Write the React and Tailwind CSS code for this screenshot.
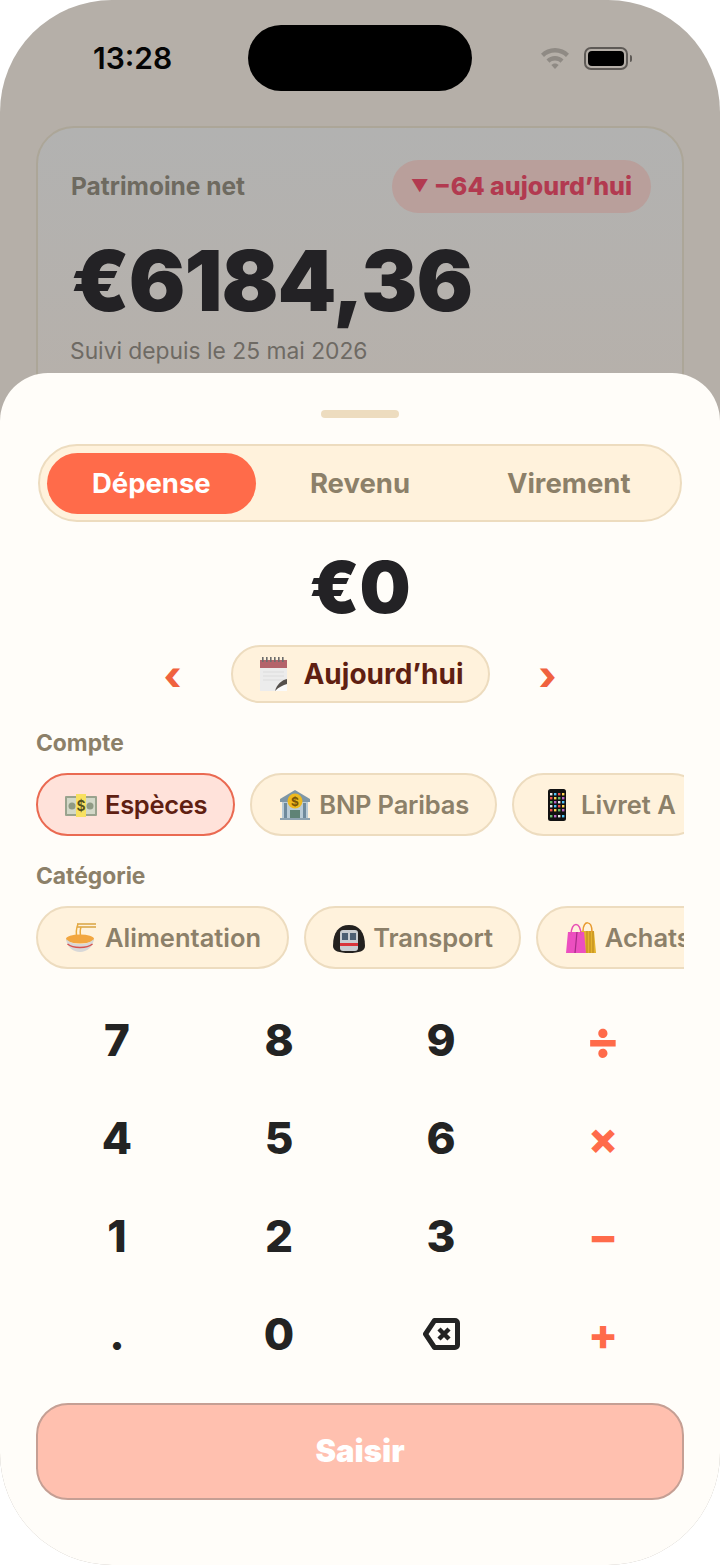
import React from 'react';

const CashIcon = () => (
  <svg width="32" height="26" viewBox="0 0 32 26">
    <rect x="0" y="4" width="32" height="20" rx="1" fill="#9aa38e" />
    <rect x="2" y="6" width="28" height="16" fill="#d3d8c8" />
    <circle cx="7" cy="14" r="3.5" fill="#8f9a84" />
    <circle cx="25" cy="14" r="3.5" fill="#8f9a84" />
    <rect x="11" y="2" width="10" height="23" fill="#f8e060" />
    <text x="16" y="19" textAnchor="middle" fontSize="14" fontWeight="600" fill="#54521f" fontFamily="Inter, sans-serif">$</text>
  </svg>
);

const BankIcon = () => (
  <svg width="32" height="32" viewBox="0 0 32 32">
    <path d="M1 10 16 1l15 9v3H1z" fill="#7f97a6" />
    <rect x="3" y="13" width="26" height="16" fill="#b9cbd6" />
    <rect x="5" y="14" width="3" height="15" fill="#6f8a9c" />
    <rect x="24" y="14" width="3" height="15" fill="#6f8a9c" />
    <rect x="11" y="21" width="10" height="8" fill="#5f8376" />
    <rect x="1" y="29" width="30" height="2" fill="#8ea3b1" />
    <circle cx="16" cy="12" r="7.500" fill="#eeb91e" />
    <text x="16" y="16.500" textAnchor="middle" fontSize="12" fontWeight="700" fill="#7a5607" fontFamily="Inter, sans-serif">$</text>
  </svg>
);

const PhoneIcon = () => (
  <svg width="32" height="32" viewBox="0 0 32 32">
    <rect x="7" y="0" width="18" height="32" rx="2.500" fill="#111" />
    {[5, 9, 13, 17, 21, 27].map((y, r) =>
      [10, 14, 18, 22].map((x, c) => (
        <rect
          key={`${r}-${c}`}
          x={x - 1}
          y={y - 1}
          width="2.400"
          height="2.400"
          fill={['#e8e8e8', '#4fc3f7', '#ef5350', '#ffd54f', '#66bb6a', '#ba68c8'][(r * 2 + c) % 6]}
        />
      ))
    )}
  </svg>
);

const NoodleIcon = () => (
  <svg width="32" height="30" viewBox="0 0 32 30">
    <path d="M12 1h19M12 4h19" stroke="#d9a441" strokeWidth="1.500" />
    <path d="M13 1c-2 5-2 10-1 14M16 4c-1 3-1 7 0 11" stroke="#e8a93c" strokeWidth="1.500" fill="none" />
    <ellipse cx="15" cy="16" rx="14" ry="4.500" fill="#f2a63f" />
    <path d="M1 16c1 8 7 13 14 13s13-5 14-13c-3 3-8 5-14 5S4 19 1 16z" fill="#d8d8d8" />
    <path d="M2.500 21c3 2.500 7.500 3.500 12.500 3.500s9.500-1 12.500-3.500" stroke="#d9534f" strokeWidth="1.500" fill="none" />
  </svg>
);

const MetroIcon = () => (
  <svg width="32" height="32" viewBox="0 0 32 32">
    <path d="M0 24C0 10 6 3 16 3s16 7 16 21c0 5-6 7-16 7S0 29 0 24z" fill="#23211f" />
    <rect x="7" y="8" width="18" height="21" rx="3" fill="#c9ccd0" />
    <rect x="9" y="11" width="6" height="7" fill="#4d5f73" />
    <rect x="17" y="11" width="6" height="7" fill="#4d5f73" />
    <rect x="7" y="21" width="18" height="3" fill="#d9343a" />
  </svg>
);

const BagsIcon = () => (
  <svg width="32" height="32" viewBox="0 0 32 32">
    <path d="M16 9h13l2 22H16z" fill="#e4b32e" />
    <path d="M22 9v22M25 9v22M28 9v22" stroke="#b9851d" strokeWidth="1" />
    <path d="M18 9c0-11 9-11 9 1" stroke="#e89a2e" strokeWidth="1.500" fill="none" />
    <path d="M3 10h16l2 21H1z" fill="#ec4fc0" />
    <path d="M12 10 10 31" stroke="#a62c85" strokeWidth="1.200" />
    <path d="M6 13c0-14 10-14 10 0" stroke="#e94fb5" strokeWidth="1.500" fill="none" />
  </svg>
);

const CalendarIcon = () => (
  <svg width="29" height="34" viewBox="0 0 29 34">
    <rect x="1" y="3" width="27" height="31" fill="#ececec" />
    <rect x="1" y="3" width="27" height="8" fill="#b4636a" />
    {[3, 7, 11, 15, 19, 23].map((x) => (
      <rect key={x} x={x} y="0" width="1.600" height="5" fill="#6d6d6d" />
    ))}
    <path d="M4 15h21M4 19h21M4 23h21" stroke="#dcdcdc" strokeWidth="1" />
    <path d="M28 22c-5 1-10 5-12 12h12z" fill="#fafafa" />
    <path d="M28 22c-5 1-10 5-12 12 4-4 8-6 12-7z" fill="#55504c" />
  </svg>
);

const BackspaceIcon = () => (
  <svg width="37" height="32" viewBox="0 0 37 32" fill="none" stroke="#232323" strokeLinejoin="round">
    <path d="M11.500 2.500H32a2.500 2.500 0 0 1 2.500 2.500v22a2.500 2.500 0 0 1-2.500 2.500H11.500L2.500 16z" strokeWidth="5" />
    <path d="M16 11l10 10M26 11 16 21" strokeWidth="4.500" />
  </svg>
);

const WifiIcon = () => (
  <svg width="30" height="24" viewBox="0 0 30 24" fill="#8f8a84">
    <path d="M15 2C9.500 2 4.600 4.200 1 7.800l3 3.200C6.800 8.200 10.700 6.500 15 6.500s8.200 1.700 11 4.500l3-3.200C25.400 4.200 20.500 2 15 2z" />
    <path d="M15 10c-3.300 0-6.300 1.300-8.500 3.500l3 3.200c1.400-1.400 3.400-2.300 5.500-2.300s4.100.9 5.500 2.300l3-3.200C21.300 11.300 18.300 10 15 10z" />
    <path d="M15 17.500c-1.500 0-2.800.6-3.700 1.500L15 23l3.700-4c-.9-.9-2.200-1.500-3.700-1.500z" />
  </svg>
);

const Chip = ({ icon, label, active, labelClass }) => (
  <div
    className={`flex h-[63px] shrink-0 items-center gap-[8px] rounded-full border-2 pl-[27px] pr-[26px] text-[25.5px] font-semibold ${
      active
        ? 'border-[#ea6a52] bg-[#ffe2da] tracking-[-0.3px] text-[#5f1f12]'
        : 'border-[#eddcbf] bg-[#fff2dc] text-[#8c8069]'
    }`}
  >
    {icon}
    <span className={`mt-[1px] ${labelClass || ''}`}>{label}</span>
  </div>
);

const Key = ({ children, op }) => (
  <div className={`flex h-[98px] items-center justify-center ${op ? 'text-[#ff6b4a]' : 'text-[#232323]'} text-[44px] font-extrabold`}>
    {children}
  </div>
);

export default function App() {
  return (
    <div className="w-[720px] h-[1565px] bg-white font-['Inter',sans-serif]">
      <div className="relative h-full overflow-hidden rounded-[112px] bg-[#b5afa8]">
        {/* status bar */}
        <div className="flex items-center pl-[93px] pr-[88px] pt-[25px]">
          <span className="w-[155px] text-[30px] font-semibold leading-[66px] text-[#050505]">13:28</span>
          <div className="h-[66px] w-[224px] rounded-[33px] bg-black" />
          <div className="ml-auto flex items-center gap-[14px]">
            <WifiIcon />
            <div className="flex items-center gap-[2px]">
              <div className="h-[23px] w-[44px] rounded-[7px] border-2 border-[#5e5a56] p-[2px]">
                <div className="h-full w-full rounded-[4px] bg-black" />
              </div>
              <div className="h-[7px] w-[2px] rounded-r bg-[#5e5a56]" />
            </div>
          </div>
        </div>

        {/* net worth card behind the sheet */}
        <div className="mx-[36px] mt-[35px] h-[320px] rounded-[38px] border-2 border-[#aca698] bg-linear-to-b from-[#b2b2b1] to-[#b7b0a9] pl-[32px] pr-[31px] pt-[32px]">
          <div className="flex items-center justify-between">
            <span className="ml-[1px] text-[24.5px] font-bold text-[#6e6a60]">Patrimoine net</span>
            <div className="flex h-[53px] items-center gap-[5px] rounded-full bg-[#b99f9b] pl-[19px] pr-[19px] text-[25px] font-extrabold text-[#b23a50]">
              <span className="text-[17px]">▼</span>
              <span>−64 aujourd’hui</span>
            </div>
          </div>
          <div className="ml-[1px] mt-[19px] text-[84px] font-black leading-[98px] tracking-[-1px] text-[#232225]">€6184,36</div>
          <div className="mt-[6px] text-[22.8px] leading-[30px] text-[#6e6a64]">Suivi depuis le 25 mai 2026</div>
        </div>

        {/* add transaction sheet */}
        <div className="absolute inset-x-0 bottom-0 top-[373px] flex flex-col rounded-t-[48px] bg-[#fffdf9] px-[36px] pt-[37px]">
          <div className="mx-auto h-[8px] w-[78px] rounded-full bg-[#eddcbf]" />

          <div className="mx-[2px] mt-[26px] flex h-[78px] items-center rounded-full border-2 border-[#eddcbf] bg-[#fff2dc] p-[7px] text-[27.5px] font-bold">
            <div className="flex h-[61px] flex-1 items-center justify-center rounded-full bg-[#ff6b4a] pt-[2px] text-white">Dépense</div>
            <div className="flex h-[61px] flex-1 items-center justify-center pt-[2px] text-[#8c8069]">Revenu</div>
            <div className="flex h-[61px] flex-1 items-center justify-center pt-[2px] text-[#8c8069]">Virement</div>
          </div>

          <div className="mt-[25px] text-center text-[72px] font-black leading-[80px] text-[#232225]">€0</div>

          <div className="mt-[18px] flex items-center justify-center">
            <span className="mr-[49px] mt-[4px] text-[40px] font-extrabold leading-none text-[#f0623f]">‹</span>
            <div className="flex h-[58px] w-[259px] items-center justify-center gap-[15px] rounded-full border-2 border-[#eddcbf] bg-[#fff2dc] pl-[3px] text-[28px] font-bold text-[#5f1f12]">
              <CalendarIcon />
              <span>Aujourd’hui</span>
            </div>
            <span className="ml-[49px] mt-[4px] text-[40px] font-extrabold leading-none text-[#f0623f]">›</span>
          </div>

          <div className="mt-[26px] text-[22.8px] font-bold leading-[28px] text-[#8c8069]">Compte</div>
          <div className="mt-[16px] flex gap-[15px] overflow-hidden">
            <Chip icon={<CashIcon />} label="Espèces" active />
            <Chip icon={<BankIcon />} label="BNP Paribas" labelClass="tracking-[-0.18px]" />
            <Chip icon={<PhoneIcon />} label="Livret A" />
          </div>

          <div className="mt-[26px] text-[22.8px] font-bold leading-[28px] text-[#8c8069]">Catégorie</div>
          <div className="mt-[16px] flex gap-[15px] overflow-hidden">
            <Chip icon={<NoodleIcon />} label="Alimentation" />
            <Chip icon={<MetroIcon />} label="Transport" labelClass="tracking-[-0.1px]" />
            <Chip icon={<BagsIcon />} label="Achats" />
          </div>

          <div className="mt-[22px] grid grid-cols-4">
            <Key>7</Key>
            <Key>8</Key>
            <Key>9</Key>
            <Key op><span className="text-[50px]">÷</span></Key>
            <Key>4</Key>
            <Key>5</Key>
            <Key>6</Key>
            <Key op>×</Key>
            <Key>1</Key>
            <Key>2</Key>
            <Key>3</Key>
            <Key op>−</Key>
            <Key>.</Key>
            <Key>0</Key>
            <Key><BackspaceIcon /></Key>
            <Key op>+</Key>
          </div>

          <div className="mt-[20px] flex h-[97px] items-center justify-center rounded-[32px] border-2 border-[#c59f94] bg-[#ffc0af] text-[31px] font-black text-white">
            Saisir
          </div>
        </div>
      </div>
    </div>
  );
}
